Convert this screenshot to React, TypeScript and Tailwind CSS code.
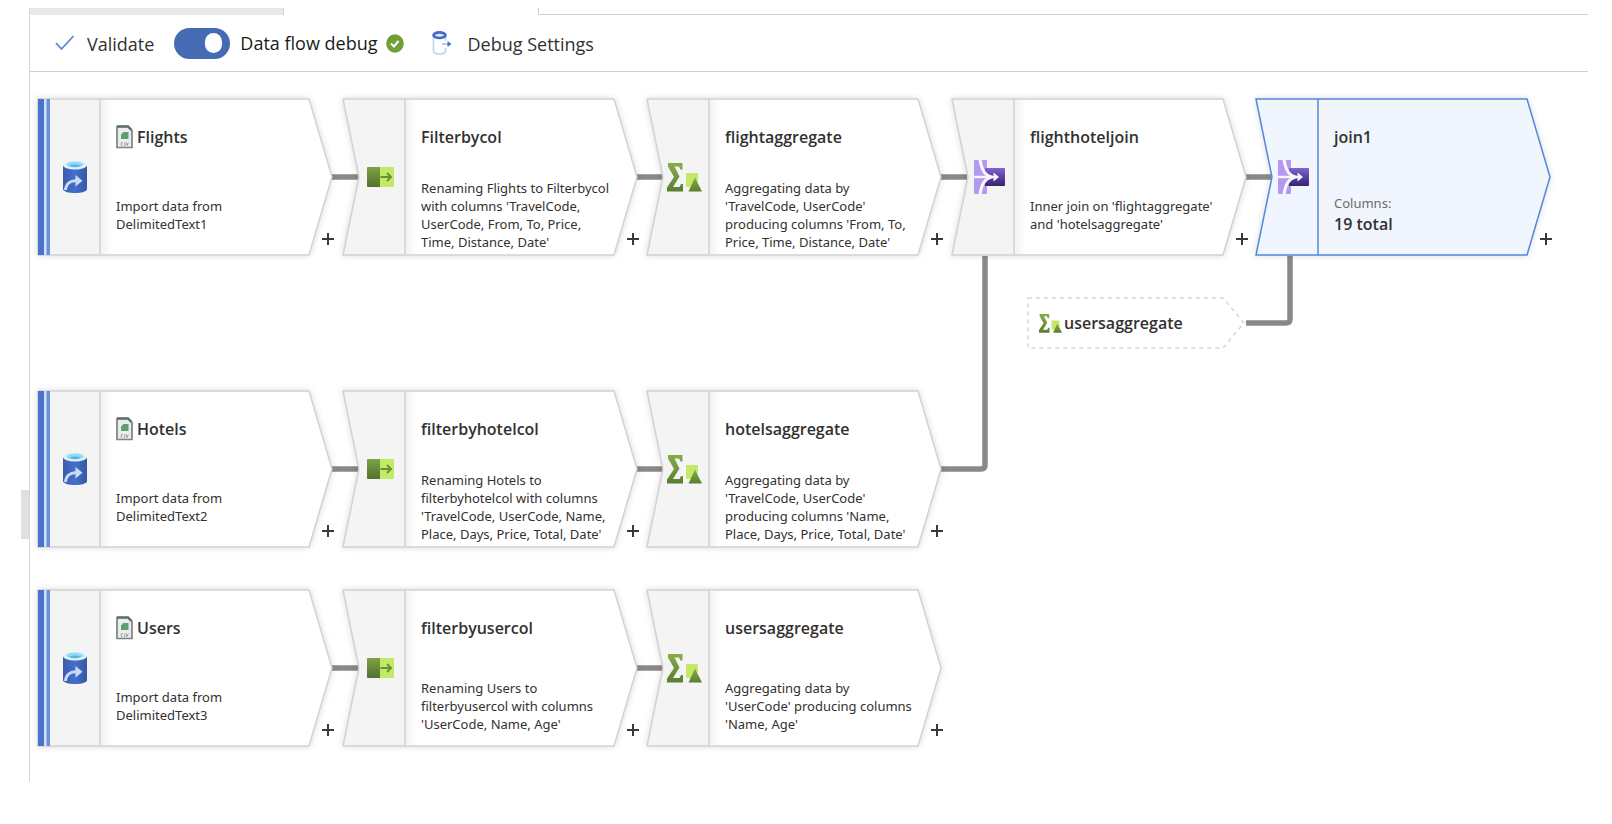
import React from "react";

type Kind = "source" | "select" | "aggregate" | "join";

interface FlowNode {
  id: string;
  kind: Kind;
  x: number;
  y: number;
  title: string;
  lines?: string[];
  columns?: string;
}

const NODE_W = 294;
const NODE_H = 156;

const nodes: FlowNode[] = [
  { id: "flights", kind: "source", x: 8, y: 27, title: "Flights", lines: ["Import data from", "DelimitedText1"] },
  { id: "filterbycol", kind: "select", x: 313, y: 27, title: "Filterbycol", lines: ["Renaming Flights to Filterbycol", "with columns 'TravelCode,", "UserCode, From, To, Price,", "Time, Distance, Date'"] },
  { id: "flightaggregate", kind: "aggregate", x: 617, y: 27, title: "flightaggregate", lines: ["Aggregating data by", "'TravelCode, UserCode'", "producing columns 'From, To,", "Price, Time, Distance, Date'"] },
  { id: "flighthoteljoin", kind: "join", x: 922, y: 27, title: "flighthoteljoin", lines: ["Inner join on 'flightaggregate'", "and 'hotelsaggregate'"] },
  { id: "join1", kind: "join", x: 1226, y: 27, title: "join1", columns: "19 total" },
  { id: "hotels", kind: "source", x: 8, y: 319, title: "Hotels", lines: ["Import data from", "DelimitedText2"] },
  { id: "filterbyhotelcol", kind: "select", x: 313, y: 319, title: "filterbyhotelcol", lines: ["Renaming Hotels to", "filterbyhotelcol with columns", "'TravelCode, UserCode, Name,", "Place, Days, Price, Total, Date'"] },
  { id: "hotelsaggregate", kind: "aggregate", x: 617, y: 319, title: "hotelsaggregate", lines: ["Aggregating data by", "'TravelCode, UserCode'", "producing columns 'Name,", "Place, Days, Price, Total, Date'"] },
  { id: "users", kind: "source", x: 8, y: 518, title: "Users", lines: ["Import data from", "DelimitedText3"] },
  { id: "filterbyusercol", kind: "select", x: 313, y: 518, title: "filterbyusercol", lines: ["Renaming Users to", "filterbyusercol with columns", "'UserCode, Name, Age'"] },
  { id: "usersaggregate", kind: "aggregate", x: 617, y: 518, title: "usersaggregate", lines: ["Aggregating data by", "'UserCode' producing columns", "'Name, Age'"] },
];

const links = [
  "M302 105H328",
  "M607 105H633",
  "M911 105H937",
  "M1216 105H1241",
  "M302 397H328",
  "M607 397H633",
  "M302 596H328",
  "M607 596H633",
  "M911 397H951Q955 397 955 393V184",
  "M1216 251H1256Q1260 251 1260 247V184",
];

function SourceIcon() {
  return (
    <svg className="h-[34px] w-6" viewBox="0 0 24 34" aria-hidden="true">
      <defs>
        <linearGradient id="cyl" x1="0" x2="1">
          <stop offset="0" stopColor="#3a5da8" />
          <stop offset="0.5" stopColor="#456fce" />
          <stop offset="1" stopColor="#3558a2" />
        </linearGradient>
      </defs>
      <path d="M0 5V29C0 31.500 5.500 33 12 33S24 31.500 24 29V5Z" fill="url(#cyl)" />
      <ellipse cx="12" cy="5" rx="12" ry="4.500" fill="#e3f1f9" />
      <ellipse cx="12" cy="4.500" rx="8.500" ry="3" fill="#8edcf7" />
      <path d="M6 5.700Q12 3.500 18 5.700Q12 8.500 6 5.700Z" fill="#55b4e0" />
      <path d="M2.500 30C3 24 7 20.500 13 20.800" fill="none" stroke="#c9dbf6" strokeWidth="3" />
      <path d="M12.500 15L19.500 20.800L12.500 26.500Z" fill="#c9dbf6" />
    </svg>
  );
}

function SelectIcon() {
  return (
    <svg className="h-5 w-[27px]" viewBox="0 0 27 20" aria-hidden="true">
      <defs>
        <linearGradient id="sel" x2="0" y2="1">
          <stop offset="0" stopColor="#7da245" />
          <stop offset="1" stopColor="#547030" />
        </linearGradient>
      </defs>
      <rect width="27" height="20" rx="1" fill="#c3ea66" />
      <path d="M1 0H13V20H1Q0 20 0 19V1Q0 0 1 0Z" fill="url(#sel)" />
      <path d="M13.500 10H24M20 6L24 10L20 14" fill="none" stroke="#68903b" strokeWidth="2" />
    </svg>
  );
}

function AggregateIcon({ className }: { className: string }) {
  return (
    <svg className={className} viewBox="0 0 35 29" preserveAspectRatio="none" aria-hidden="true">
      <defs>
        <linearGradient id="agg" x2="0" y2="1">
          <stop offset="0" stopColor="#86ad4b" />
          <stop offset="1" stopColor="#5a7e30" />
        </linearGradient>
      </defs>
      <path d="M1 0H15.500V6.500H13.500L12 3.500H7.500L12.500 13.500L6 24H12.500L14 21H16V28.500H0V24.500L7 14L1 3.500Z" fill="url(#agg)" />
      <path d="M19 10H31V18L26 24H20Q19 24 19 23Z" fill="#c4e966" />
      <path d="M28 14.500L35 28.500H21.500Z" fill="url(#agg)" />
    </svg>
  );
}

function JoinIcon() {
  return (
    <svg className="h-[34px] w-[31px]" viewBox="0 0 31 34" aria-hidden="true">
      <defs>
        <linearGradient id="joi" x2="0" y2="1">
          <stop offset="0" stopColor="#8162cf" />
          <stop offset="1" stopColor="#3a2272" />
        </linearGradient>
      </defs>
      <path d="M1 0H12Q13 0 13 1V33Q13 34 12 34H1Q0 34 0 33V1Q0 0 1 0Z" fill="#b39af0" />
      <path d="M11 8H30Q31 8 31 9V25Q31 26 30 26H11Z" fill="url(#joi)" />
      <path d="M6 -1C7 8 10 15 17 17C10 19 7 26 6 35" fill="none" stroke="#f7f5fd" strokeWidth="3" />
      <path d="M0 17H22" stroke="#f7f5fd" strokeWidth="2.400" />
      <path d="M19.500 12.500L25 17L19.500 21.500Z" fill="#f7f5fd" />
    </svg>
  );
}

function CsvIcon() {
  return (
    <svg className="h-6 w-[17px] shrink-0" viewBox="0 0 17 24" aria-hidden="true">
      <path d="M1 1.500H12L16 5.500V22.500H1Z" fill="#eaeced" stroke="#7b8480" strokeWidth="1.700" />
      <path d="M1 1.500H12L15.500 5" fill="none" stroke="#5d7067" strokeWidth="2.400" />
      <path d="M5 14V9.500L7.500 7H12.500V14Z" fill="#5f9f69" />
      <path d="M7 17.500Q5 17 5 19.300Q5 21 6.500 20.800M9.500 17.500Q8 18 8.800 19.300T8 21M10 17.500L11 20.500L12.300 17.500" fill="none" stroke="#9a9f9c" strokeWidth="1" />
    </svg>
  );
}

function KindIcon({ kind }: { kind: Kind }) {
  if (kind === "source") return <SourceIcon />;
  if (kind === "select") return <SelectIcon />;
  if (kind === "aggregate") return <AggregateIcon className="h-[29px] w-[35px]" />;
  return <JoinIcon />;
}

function NodeShape({ kind, selected }: { kind: Kind; selected: boolean }) {
  const stroke = selected ? "#5388dc" : "#d2d2d2";
  const left = kind === "source" ? "M0 0V156" : "M0 0L16 78L0 156";
  return (
    <svg
      className="absolute inset-0 h-full w-full overflow-visible drop-shadow-[0_0_3px_rgba(0,0,0,0.14)]"
      viewBox={`0 0 ${NODE_W} ${NODE_H}`}
      aria-hidden="true"
    >
      <defs>
        <linearGradient id="fade">
          <stop offset="0" stopColor="#f1f1f1" />
          <stop offset="1" stopColor="#ffffff" />
        </linearGradient>
      </defs>
      <path d={`${left}H271L294 78L271 0Z`} fill={selected ? "#f1f5fd" : "#ffffff"} />
      <path d={`${left}H62V0Z`} fill={selected ? "#f1f5fd" : "#f4f4f4"} />
      <rect x="62" y="1" width="12" height="154" fill={selected ? "#f3f5f8" : "url(#fade)"} />
      <path d={`${left}H271L294 78L271 0Z`} fill="none" stroke={stroke} strokeWidth="1.500" />
      <path d="M62 0V156" stroke={stroke} strokeWidth="1.500" />
      {kind === "source" && (
        <>
          <path d="M0 0H12V156H0Z" fill="#d3e1f7" />
          <path d="M0 0H6V156H0Z" fill="#4a73cb" />
          <path d="M8.500 0H12V156H8.500Z" fill="#6890dc" />
        </>
      )}
    </svg>
  );
}

function NodeCard({ node }: { node: FlowNode }) {
  const selected = node.id === "join1";
  return (
    <article className="absolute flex h-[156px] w-[294px]" style={{ left: node.x, top: node.y }}>
      <NodeShape kind={node.kind} selected={selected} />
      <div className="relative flex w-[62px] shrink-0 items-center justify-center pl-3">
        <KindIcon kind={node.kind} />
      </div>
      <div className="relative flex flex-1 flex-col pt-[26px] pl-4">
        <h2 className="flex h-6 items-center gap-1 font-['Open_Sans','Noto_Sans',sans-serif] text-base leading-6 font-semibold text-[#323130]">
          {node.kind === "source" && <CsvIcon />}
          {node.title}
        </h2>
        <div className="flex flex-1 flex-col justify-center pt-[25px] text-[13px] leading-[18px] whitespace-nowrap text-[#323130]">
          {node.lines?.map((line) => <p key={line}>{line}</p>)}
          {node.columns && (
            <>
              <p className="text-[#6b6a69]">Columns:</p>
              <p className="font-['Open_Sans','Noto_Sans',sans-serif] text-base leading-6 font-semibold text-[#323130]">{node.columns}</p>
            </>
          )}
        </div>
      </div>
      <button type="button" aria-label={`Add step after ${node.title}`} className="absolute -right-1 bottom-2 flex size-4 items-center justify-center">
        <svg className="size-3" viewBox="0 0 12 12" aria-hidden="true">
          <path d="M6 0V12M0 6H12" stroke="#3b3a39" strokeWidth="2" />
        </svg>
      </button>
    </article>
  );
}

function ReferenceNode() {
  return (
    <article className="absolute top-[226px] left-[998px] flex h-[50px] w-[216px] items-center gap-0.5 pl-[11px]">
      <svg className="absolute inset-0 h-full w-full overflow-visible" viewBox="0 0 216 50" aria-hidden="true">
        <path d="M0 0H195L216 25L195 50H0Z" fill="#ffffff" stroke="#d6d6d6" strokeWidth="1.500" strokeDasharray="4 4" />
      </svg>
      <AggregateIcon className="relative h-[19px] w-[23px]" />
      <h2 className="relative font-['Open_Sans','Noto_Sans',sans-serif] text-base leading-6 font-semibold text-[#323130]">usersaggregate</h2>
    </article>
  );
}

function Toolbar() {
  return (
    <div role="toolbar" aria-label="Data flow" className="flex h-[57px] items-center border-b border-[#d0d0d0] pl-[25px] font-['Open_Sans','Noto_Sans',sans-serif] text-lg text-[#323130]">
      <button type="button" className="flex items-center gap-3">
        <svg className="h-4 w-5" viewBox="0 0 20 16" aria-hidden="true">
          <path d="M1 8L6.500 14L18.500 1" fill="none" stroke="#5a86d6" strokeWidth="1.800" />
        </svg>
        <span className="pt-0.5">Validate</span>
      </button>
      <label className="ml-5 flex items-center gap-2.5 text-[#1b1a19]">
        <input type="checkbox" role="switch" defaultChecked className="peer sr-only" />
        <span className="flex h-[31px] w-14 items-center justify-end rounded-full bg-[#466bb5] pr-2">
          <span className="h-5 w-[17px] rounded-full bg-white" />
        </span>
        Data flow debug
      </label>
      <svg className="ml-2 h-[19px] w-[18px]" viewBox="0 0 18 19" aria-hidden="true">
        <ellipse cx="9" cy="9.500" rx="8.800" ry="9.300" fill="#6fa038" />
        <path d="M5 9.500L8 12.500L12.500 7" fill="none" stroke="#ffffff" strokeWidth="2" />
      </svg>
      <button type="button" className="ml-7 flex items-center gap-4">
        <svg className="h-6 w-5" viewBox="0 0 20 24" aria-hidden="true">
          <path d="M1.500 5V20Q2 23 7.500 23T13.500 20V17M13.500 5V10" fill="none" stroke="#c3d3f0" strokeWidth="1.700" />
          <ellipse cx="7.500" cy="4.200" rx="6" ry="2.800" fill="#dfe9fa" stroke="#416bc6" strokeWidth="2.600" />
          <path d="M10 13H17" stroke="#9db8e8" strokeWidth="1.500" />
          <path d="M15.500 10L19.500 13L15.500 16Z" fill="#4472cf" />
        </svg>
        <span className="pt-0.5">Debug Settings</span>
      </button>
    </div>
  );
}

export default function App() {
  return (
    <div className="flex min-h-screen bg-white pt-2 pr-6 font-['Noto_Sans','Open_Sans',sans-serif]">
      <div className="flex w-[29px] shrink-0 justify-end pt-[482px]">
        <button type="button" aria-label="Expand panel" className="h-[49px] w-2 bg-[#e0e0e0]" />
      </div>
      <main className="flex h-[774px] min-w-0 flex-1 flex-col border-l border-[#d8d8d8]">
        <div className="flex h-[7px]">
          <div className="w-[254px] border-r border-[#d0d0d0] bg-[#e9e9e9]" />
          <div className="w-[254px]" />
          <div className="flex-1 border-b border-l border-[#d0d0d0]" />
        </div>
        <Toolbar />
        <section aria-label="Data flow canvas" className="relative flex-1">
          <svg className="absolute inset-0 h-full w-full overflow-visible" aria-hidden="true">
            {links.map((d) => (
              <path key={d} d={d} fill="none" stroke="#8a8986" strokeWidth="5.500" />
            ))}
          </svg>
          {nodes.map((node) => (
            <NodeCard key={node.id} node={node} />
          ))}
          <ReferenceNode />
        </section>
      </main>
    </div>
  );
}
